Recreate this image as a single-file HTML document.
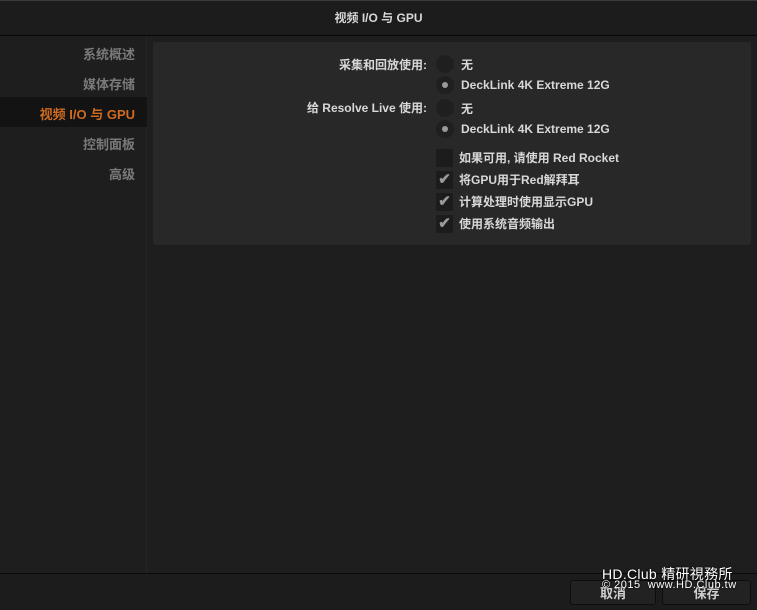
<!DOCTYPE html>
<html><head><meta charset="utf-8"><style>
*{margin:0;padding:0;box-sizing:border-box}
body{width:757px;height:610px;background:#1e1e1e;font-family:"Liberation Sans","Noto Sans CJK SC",sans-serif;font-size:12px;font-weight:bold;color:#d0d0d0;position:relative;overflow:hidden}
.abs{position:absolute}
.title{left:0;top:0;width:757px;height:36px;background:#1c1c1c;border-bottom:1px solid #080808;border-top:1px solid #3a3a3a;text-align:center;line-height:34px;color:#d8d8d8}
.side{left:0;top:37px;width:147px;height:536px;background:#1e1e1e;border-right:1px solid #262626}
.nav{position:absolute;left:0;width:135px;text-align:right;color:#7a7a7a;font-size:13px}
.sel{left:0;top:97px;width:147px;height:30px;background:#131313}
.panel{left:153px;top:42px;width:598px;height:203px;background:#282828;border-radius:2px}
.lbl{text-align:right;width:200px;left:227px;color:#d8d8d8}
.radio{width:18px;height:18px;border-radius:50%;background:#1f1f1f;left:436px}
.dot{position:absolute;left:6px;top:6px;width:6px;height:6px;border-radius:50%;background:#9a9a9a}
.cb{width:17px;height:18px;background:#1c1c1c;left:436px;border-radius:1px;color:#9a9a9a;font-size:15px;line-height:18px;text-align:center}
.t{left:461px;color:#d8d8d8}
.bottom{left:0;top:573px;width:757px;height:37px;background:#1c1c1c;border-top:1px solid #0a0a0a}
.btn{top:580px;height:25px;background:#222;border:1px solid #0d0d0d;border-radius:3px;color:#d0d0d0;text-align:center;line-height:25px;font-size:13px}
.wm{color:#fff;font-weight:normal;text-shadow:0 0 2px #000}
</style></head><body>
<div class="abs title">视频 I/O 与 GPU</div>
<div class="abs side"></div>
<div class="abs sel"></div>
<div class="nav" style="top:44px">系统概述</div>
<div class="nav" style="top:74px">媒体存储</div>
<div class="nav" style="top:104px;color:#d06a1e">视频 I/O 与 GPU</div>
<div class="nav" style="top:134px">控制面板</div>
<div class="nav" style="top:164px">高级</div>
<div class="abs panel"></div>
<div class="abs lbl" style="top:56px">采集和回放使用:</div>
<div class="abs lbl" style="top:99px">给 Resolve Live 使用:</div>
<div class="abs radio" style="top:55px"></div><div class="abs t" style="top:56px">无</div>
<div class="abs radio" style="top:76px"><div class="dot"></div></div><div class="abs t" style="top:78px">DeckLink 4K Extreme 12G</div>
<div class="abs radio" style="top:99px"></div><div class="abs t" style="top:100px">无</div>
<div class="abs radio" style="top:120px"><div class="dot"></div></div><div class="abs t" style="top:122px">DeckLink 4K Extreme 12G</div>
<div class="abs cb" style="top:149px"></div><div class="abs t" style="top:149px;left:459px">如果可用, 请使用 Red Rocket</div>
<div class="abs cb" style="top:171px">✔</div><div class="abs t" style="top:171px;left:459px">将GPU用于Red解拜耳</div>
<div class="abs cb" style="top:193px">✔</div><div class="abs t" style="top:193px;left:459px">计算处理时使用显示GPU</div>
<div class="abs cb" style="top:215px">✔</div><div class="abs t" style="top:215px;left:459px">使用系统音频输出</div>
<div class="abs bottom"></div>
<div class="abs btn" style="left:570px;width:86px">取消</div>
<div class="abs btn" style="left:662px;width:89px">保存</div>
<div class="abs wm" style="left:602px;top:564px;font-size:14px;letter-spacing:0.3px">HD.Club 精研視務所</div>
<div class="abs wm" style="left:602px;top:579px;font-size:11px;letter-spacing:0.5px">© 2015&nbsp; www.HD.Club.tw</div>
</body></html>
